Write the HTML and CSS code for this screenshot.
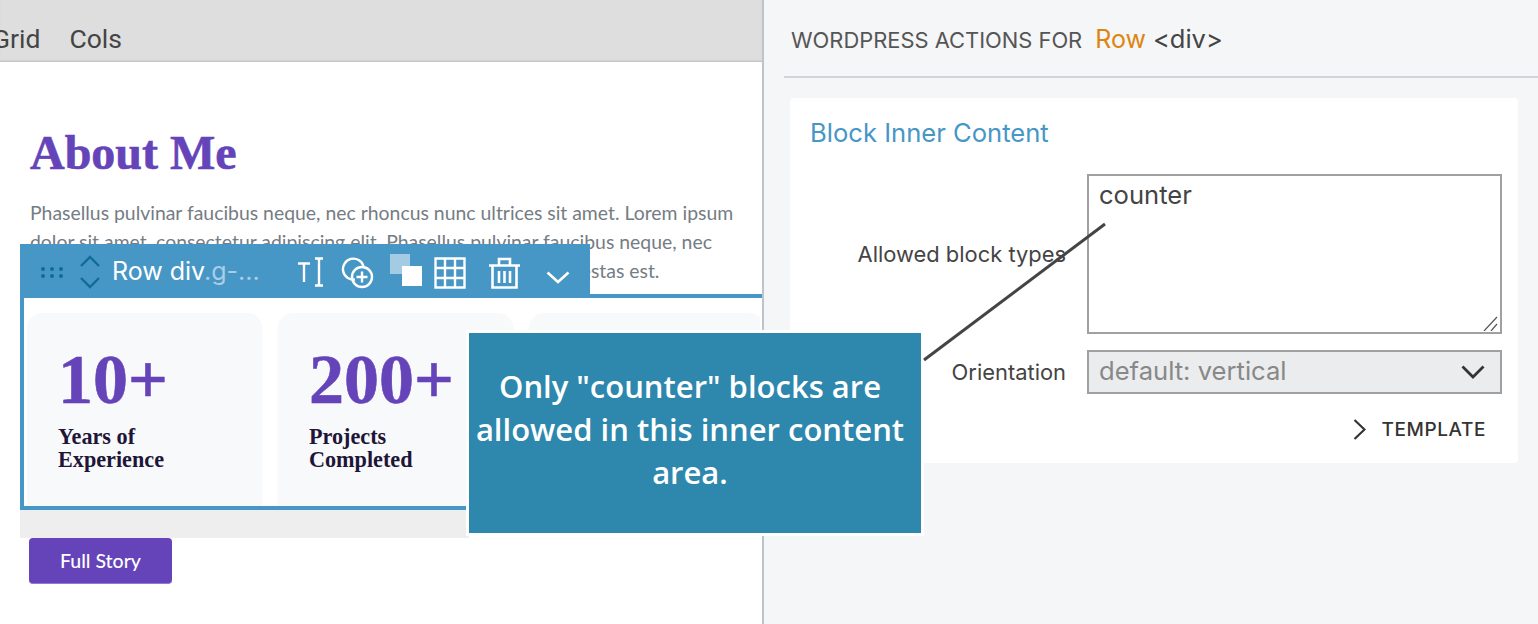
FILE: index.html
```html
<!DOCTYPE html>
<html lang="en">
<head>
<meta charset="utf-8">
<title>WordPress Actions</title>
<link rel="stylesheet" href="styles.css">
</head>
<body>
<div class="page">
  <main class="editor">
    <nav class="tabs"><span class="tab">Grid</span><span class="tab">Cols</span></nav>
    <section class="content">
      <h1 class="title">About Me</h1>
      <p class="lead">
        <span class="lead-line">Phasellus pulvinar faucibus neque, nec rhoncus nunc ultrices sit amet. Lorem ipsum</span>
        <span class="lead-line">dolor sit amet, consectetur adipiscing elit. Phasellus pulvinar faucibus neque, nec</span>
        <span class="lead-line">rhoncus nunc ultrices sit amet. Praesent vitae mauris at ulla ac egestas est.</span>
      </p>
      <div class="row-block">
        <div class="toolbar">
          <svg class="ic-drag" width="22" height="11" viewBox="0 0 22 11"><g fill="#0e6d97"><circle cx="2" cy="2" r="2"/><circle cx="11" cy="2" r="2"/><circle cx="20" cy="2" r="2"/><circle cx="2" cy="9" r="2"/><circle cx="11" cy="9" r="2"/><circle cx="20" cy="9" r="2"/></g></svg>
          <svg class="ic-move" width="22" height="34" viewBox="0 0 22 34"><path d="M2 11 11 2l9 9M2 23l9 9 9-9" fill="none" stroke="#0e6d97" stroke-width="2.4"/></svg>
          <span class="tb-label">Row div<span class="tb-class">.g-...</span></span>
          <svg class="ic-text" width="26" height="30" viewBox="0 0 26 30"><path d="M1 6.500H13M7 6.500V25M18 1.500h8M18 28.500h8M22 1.500v27" fill="none" stroke="#fff" stroke-width="2.400"/></svg>
          <svg class="ic-add" width="33" height="32" viewBox="0 0 33 32"><g fill="none" stroke="#fff" stroke-width="2.400"><path d="M14 22.500A10.500 10.500 0 1 1 22.500 9"/><circle cx="21" cy="20" r="10"/><path d="M21 14.500v11M15.500 20h11"/></g></svg>
          <svg class="ic-copy" width="32" height="32" viewBox="0 0 32 32"><rect width="20" height="20" fill="#a4cbe4"/><rect x="12" y="12" width="20" height="20" fill="#fff"/></svg>
          <svg class="ic-grid" width="32" height="32" viewBox="0 0 32 32"><path d="M1.500 1.500h29v29h-29zM11 1.500v29M21 1.500v29M1.500 11h29M1.500 21h29" fill="none" stroke="#fff" stroke-width="2.400"/></svg>
          <svg class="ic-trash" width="33" height="32" viewBox="0 0 33 32"><path d="M1 8.500h31M11 8V2h11v6M4.500 9v21.500h24V9M11 14v12M16.500 14v12M22 14v12" fill="none" stroke="#fff" stroke-width="2.600"/></svg>
          <svg class="ic-more" width="24" height="13" viewBox="0 0 24 13"><path d="M1.500 1.500 12 11 22.500 1.500" fill="none" stroke="#fff" stroke-width="2.600"/></svg>
        </div>
        <div class="stats">
          <article class="stat"><div class="stat-num">10+</div><div class="stat-label">Years of<br>Experience</div></article>
          <article class="stat"><div class="stat-num">200+</div><div class="stat-label">Projects<br>Completed</div></article>
          <article class="stat"></article>
        </div>
      </div>
      <div class="strip"></div>
      <button class="story" type="button">Full Story</button>
    </section>
  </main>

  <aside class="panel">
    <header class="panel-head">
      <span class="panel-for">WORDPRESS ACTIONS FOR</span>
      <span class="panel-name">Row</span>
      <span class="panel-tag">&lt;div&gt;</span>
    </header>
    <section class="card">
      <h2 class="card-title">Block Inner Content</h2>
      <div class="form">
        <label class="form-label">Allowed block types</label>
        <div class="area">counter
          <svg class="grip" width="15" height="15" viewBox="0 0 15 15"><path d="M1 15 14 1M8 15l6-7" fill="none" stroke="#555" stroke-width="1.200"/></svg>
        </div>
        <label class="form-label">Orientation</label>
        <div class="select"><span class="select-text">default: vertical</span>
          <svg width="24" height="14" viewBox="0 0 24 14"><path d="M1.500 1.500 12 12 22.500 1.500" fill="none" stroke="#333" stroke-width="2.800"/></svg>
        </div>
      </div>
      <div class="template">
        <svg width="13" height="21" viewBox="0 0 13 21"><path d="M1.500 1 11.500 10.500 1.500 20" fill="none" stroke="#333" stroke-width="2.200"/></svg>
        <span>TEMPLATE</span>
      </div>
    </section>
  </aside>

  <svg class="pointer" width="190" height="145" viewBox="0 0 190 145"><path d="M2 142 183 6" stroke="#444" stroke-width="3" fill="none"/></svg>
  <div class="callout">Only "counter" blocks are allowed in this inner content area.</div>
</div>
</body>
</html>
```
FILE: styles.css
```css
* { box-sizing: border-box; }
html, body { margin: 0; padding: 0; }
body { background: #fff; font-family: "Inter", "Liberation Sans", sans-serif; overflow: hidden; }
.page { position: relative; display: flex; width: 1538px; height: 624px; overflow: hidden; }

.editor { flex: 0 0 764px; height: 624px; border-right: 2px solid #bcc4cd; background: #fff; overflow: hidden; }
.tabs { display: flex; gap: 29px; height: 62px; margin: 0; padding: 24px 0 0 0; background: #dedede; box-shadow: inset 0 -2px 2px -1px #bdbdbd; font: 26.500px/30px "Roboto", sans-serif; color: #444; }
.tab:first-child { margin-left: -8px; }

.content { padding: 62px 0 0 30px; }
.title { margin: 0 0 16px; font: bold 48px/58px "Liberation Serif", serif; -webkit-text-stroke: .6px #6543b8; color: #6543b8; }
.lead { margin: 0 0 9px; font: 19.400px/29px "Lato", sans-serif; color: #757c84; white-space: nowrap; }
.lead-line { display: block; }

.row-block { position: relative; width: 742px; height: 216px; margin-left: -10px; border: 4px solid #4696c6; border-right: 0; background: #fff; padding: 15px 2px 0 3px; }
.toolbar { position: absolute; left: -4px; top: -54px; width: 570px; height: 54px; padding: 0 0 0 21px; display: flex; align-items: flex-start; background: #4696c6; z-index: 2; }
.toolbar svg { flex: none; }
.ic-drag { margin-top: 23px; }
.ic-move { margin: 11px 0 0 16px; }
.tb-label { margin: 10px 0 0 11px; width: 170px; font: 25px/34px "Inter", sans-serif; color: #fff; white-space: nowrap; }
.tb-class { color: #a9cde5; }
.ic-text { margin: 13px 0 0 15px; }
.ic-add { margin: 13px 0 0 18px; }
.ic-copy { margin: 10px 0 0 16px; }
.ic-grid { margin: 13px 0 0 12px; }
.ic-trash { margin: 13px 0 0 22px; }
.ic-more { margin: 27px 0 0 25px; }

.stats { display: flex; gap: 16px; height: 193px; overflow: hidden; }
.stat { flex: 0 0 235px; height: 210px; padding: 33px 0 0 31px; background: #f8f9fb; border-radius: 16px; box-shadow: 0 0 3px rgba(0,0,0,.03); }
.stat-num { font: bold 70px/68px "Liberation Serif", serif; -webkit-text-stroke: .6px #6543b8; color: #6543b8; }
.stat-label { margin-top: 11px; font: bold 22.200px/23px "Liberation Serif", serif; color: #1e1538; }

.strip { width: 449px; height: 28px; margin-left: -10px; background: #eeeeee; }
.story { display: block; width: 143px; height: 46px; margin: 0 0 0 -1px; padding: 0; border: 0; border-bottom: 1px solid #9678d4; border-radius: 4px; background: #6543b8; font: 500 19.500px/45px "Lato", sans-serif; color: #fff; }

.panel { flex: 1; height: 624px; background: #f5f6f8; padding-left: 20px; }
.panel-head { display: flex; align-items: baseline; height: 78px; padding: 23px 0 0 7px; border-bottom: 2px solid #d0d3d8; }
.panel-for { font-size: 21.900px; line-height: 26px; color: #555; }
.panel-name { margin-left: 13px; font-size: 25px; color: #de8510; }
.panel-tag { margin-left: 7px; font-size: 25.500px; color: #444; }

.card { width: 728px; height: 365px; margin: 20px 0 0 6px; padding: 20px 16px 0 21px; background: #fff; border-radius: 4px; }
.card-title { margin: 0 0 26px -1px; font-weight: 400; font-size: 25.600px; line-height: 30px; color: #4696c6; }
.form { display: grid; grid-template-columns: 255px 415px; column-gap: 21px; row-gap: 16px; align-items: center; }
.form-label { justify-self: end; font: 21.900px/26px "Inter", sans-serif; color: #444; }
.area { position: relative; height: 160px; padding: 2px 10px; border: 2px solid #a0a0a0; background: #fff; font-size: 25.600px; line-height: 34px; color: #444; }
.grip { position: absolute; right: 2px; bottom: 1px; }
.select { display: flex; align-items: center; justify-content: space-between; height: 44px; padding: 0 15px 0 10px; border: 2px solid #a0a0a0; background: #ebecee; font-size: 25.600px; color: #888; }
.select-text { margin-bottom: 3px; }
.template { display: flex; align-items: center; gap: 15px; justify-content: flex-end; margin-top: 24px; padding-right: 16px; font-size: 19px; font-weight: 500; letter-spacing: .6px; color: #333; }

.pointer { position: absolute; left: 922px; top: 218px; z-index: 3; }
.callout { position: absolute; left: 466px; top: 330px; width: 458px; height: 206px; padding: 0 14px 8px 4px; display: flex; align-items: center; justify-content: center; border: 3px solid #fff; background: #2e87ad; background-clip: padding-box; font: 600 31px/43px "Open Sans", sans-serif; color: #fff; text-align: center; z-index: 2; }
```
